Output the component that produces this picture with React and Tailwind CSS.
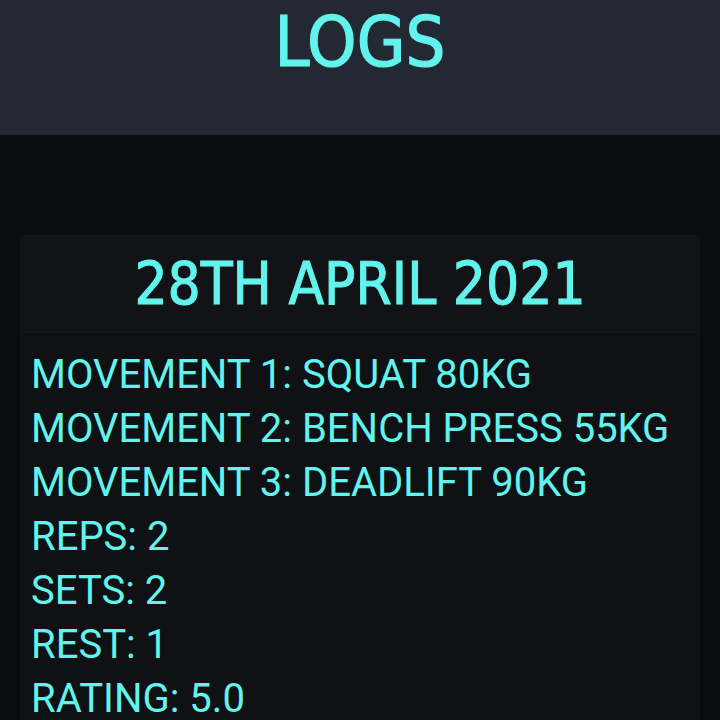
import React from "react";

const lines = [
  "MOVEMENT 1: SQUAT 80KG",
  "MOVEMENT 2: BENCH PRESS 55KG",
  "MOVEMENT 3: DEADLIFT 90KG",
  "REPS: 2",
  "SETS: 2",
  "REST: 1",
  "RATING: 5.0",
];

const App = () => {
  return (
    <div className="w-[720px] h-[720px] overflow-hidden bg-[#0b0c0f] font-['Roboto',sans-serif] text-[#62f4ec]">
      {/* Header */}
      <header className="h-[135px] bg-[#222933] flex justify-center">
        <h1 className="mt-[2px] text-[70px] leading-[80px] [-webkit-text-stroke:1.2px_#62f4ec] font-['DejaVu_Sans_Condensed',sans-serif]">LOGS</h1>
      </header>

      {/* Card */}
      <div className="mx-[20px] mt-[100px] bg-[#0f1115]">
        <div className="h-[98px] bg-[#111317] border-b border-[#15181d] flex items-center justify-center">
          <h2 className="text-[58px] leading-none [-webkit-text-stroke:1px_#62f4ec] font-['DejaVu_Sans_Condensed',sans-serif]">28TH APRIL 2021</h2>
        </div>
        <div className="px-[11px] pt-[15px] pb-4">
          {lines.map((l) => (
            <p key={l} className="text-[40px] leading-[54px]">{l}</p>
          ))}
        </div>
      </div>
    </div>
  );
};

export default App;
